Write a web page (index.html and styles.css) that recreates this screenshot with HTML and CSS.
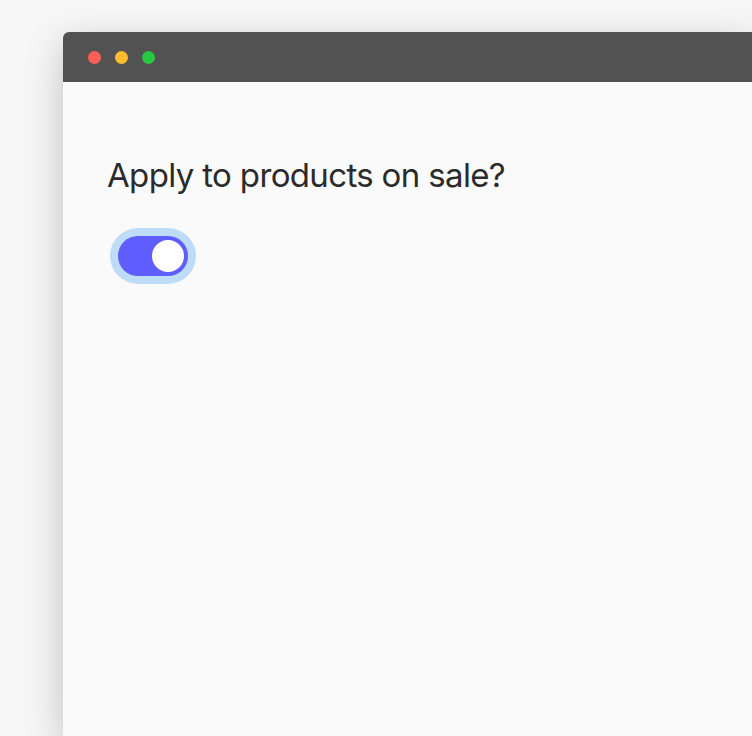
FILE: index.html
```html
<!DOCTYPE html>
<html>
<head>
<meta charset="utf-8">
<link rel="stylesheet" href="styles.css">
</head>
<body>
<div class="window">
  <div class="titlebar">
    <span class="dot red"></span>
    <span class="dot yellow"></span>
    <span class="dot green"></span>
  </div>
  <div class="content">
    <h1 class="question">Apply to products on sale?</h1>
    <div class="toggle-ring">
      <div class="toggle-track">
        <div class="toggle-knob"></div>
      </div>
    </div>
  </div>
</div>
</body>
</html>
```
FILE: styles.css
```css
html, body {
  margin: 0;
  padding: 0;
  background: #f7f7f7;
  overflow: hidden;
  width: 752px;
  height: 736px;
}
body {
  padding: 32px 0 0 63px;
  box-sizing: border-box;
  font-family: Inter, "Noto Sans", sans-serif;
}
.window {
  width: 689px;
  height: 704px;
  background: #fafafa;
  border-radius: 6px 0 0 0;
  box-shadow: 0 12px 40px rgba(0,0,0,0.22);
}
.titlebar {
  height: 50px;
  background: #525252;
  border-radius: 6px 0 0 0;
  display: flex;
  align-items: center;
  gap: 14px;
  padding-left: 25px;
  padding-top: 1px;
  box-sizing: border-box;
}
.dot {
  width: 13px;
  height: 13px;
  border-radius: 50%;
}
.red { background: #ff5f57; }
.yellow { background: #febc2e; }
.green { background: #28c840; }
.content {
  padding: 73px 44px 0 44px;
}
.question {
  margin: 0;
  font-size: 33px;
  font-weight: 400;
  color: #2b2b2b;
  line-height: 40px;
  letter-spacing: -0.65px;
}
.toggle-ring {
  margin-top: 33px;
  margin-left: 3px;
  width: 86px;
  height: 56px;
  box-sizing: border-box;
  padding: 8px;
  border-radius: 28px;
  background: #bddcf8;
}
.toggle-track {
  width: 70px;
  height: 40px;
  border-radius: 20px;
  background: #605dff;
  display: flex;
  align-items: center;
  justify-content: flex-end;
  padding-right: 4px;
  box-sizing: border-box;
}
.toggle-knob {
  width: 32px;
  height: 32px;
  border-radius: 50%;
  background: #ffffff;
}
```
